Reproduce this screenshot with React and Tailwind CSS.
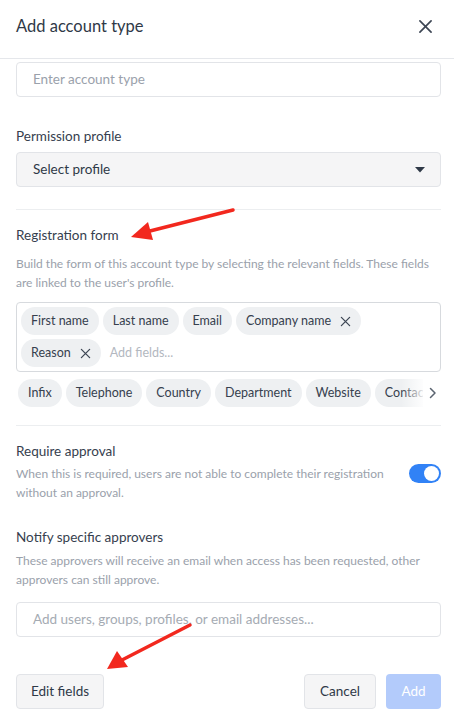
import React from 'react';

const font = { fontFamily: '"Lato", "Liberation Sans", sans-serif' };

function Chip({ label, removable }) {
  return (
    <span className="flex h-[28px] items-center gap-[9px] rounded-full bg-[#eef0f2] px-[10px] text-[12.5px] text-[#36404e] whitespace-nowrap">
      {label}
      {removable && (
        <svg width="11" height="11" viewBox="0 0 12 12" className="text-[#3d4654]">
          <path d="M1.5 1.5l9 9M10.5 1.5l-9 9" stroke="currentColor" strokeWidth="1.4" strokeLinecap="round" />
        </svg>
      )}
    </span>
  );
}

export default function App() {
  const selected = ['First name', 'Last name', 'Email'];
  const suggestions = ['Infix', 'Telephone', 'Country', 'Department', 'Website', 'Contact'];

  return (
    <div className="relative h-[719px] w-[454px] overflow-hidden bg-white text-[#36404e]" style={font}>
      {/* Header */}
      <div className="flex h-[59px] items-center justify-between border-b border-[#e5e7eb] pb-[6px] pl-4 pr-[22px]">
        <h2 className="text-[16.5px] text-[#2f3947]">Add account type</h2>
        <svg width="13" height="13" viewBox="0 0 14 14" className="text-[#3d4654]">
          <path d="M1 1l12 12M13 1L1 13" stroke="currentColor" strokeWidth="1.8" strokeLinecap="round" />
        </svg>
      </div>

      <div className="pl-4 pr-[13px] pt-[3px]">
        <div className="flex h-[35px] items-center rounded-[4px] border border-[#e2e4e8] px-4 text-[13.5px] text-[#9aa1ab]">
          Enter account type
        </div>

        <div className="mt-[29px] text-[13.5px] leading-[20px] text-[#36404e]">Permission profile</div>
        <div className="mt-[6px] flex h-[35px] items-center justify-between rounded-[4px] border border-[#e2e4e8] bg-[#f5f5f6] pl-4 pr-[15px] text-[13.5px] text-[#2f3947]">
          Select profile
          <svg width="10" height="6" viewBox="0 0 10 6"><path d="M0 0h10L5 5.5z" fill="#2f3947" /></svg>
        </div>

        <div className="mt-[22px] border-t border-[#eceef0]" />

        <div className="mt-[15px] text-[13.5px] leading-[20px] text-[#36404e]">Registration form</div>
        <p className="mt-[9px] text-[12px] leading-[19px] text-[#9aa1ab]">
          Build the form of this account type by selecting the relevant fields. These fields are linked to the user's profile.
        </p>

        <div className="mt-[10px] flex flex-wrap items-center gap-x-1 gap-y-[4px] rounded-[4px] border border-[#d7dade] px-1 py-1">
          {selected.map(s => <Chip key={s} label={s} />)}
          <Chip label="Company name" removable />
          <Chip label="Reason" removable />
          <span className="ml-[5px] text-[12.5px] text-[#b3b8bf]">Add fields...</span>
        </div>

        <div className="relative mt-[7px] flex items-center">
          <div className="ml-[2px] flex w-[405px] gap-1 overflow-hidden">
            {suggestions.map(s => <Chip key={s} label={s} />)}
          </div>
          <div className="absolute left-[385px] top-0 h-[28px] w-[25px] bg-gradient-to-r from-transparent to-white" />
          <svg width="8" height="12" viewBox="0 0 8 12" className="ml-[6px] text-[#5b6470]">
            <path d="M1.5 1.5L6 6l-4.5 4.5" fill="none" stroke="currentColor" strokeWidth="1.5" strokeLinecap="round" strokeLinejoin="round" />
          </svg>
        </div>

        <div className="mt-[18px] border-t border-[#eceef0]" />

        <div className="mt-[15px] text-[13.5px] leading-[20px] text-[#36404e]">Require approval</div>
        <div className="flex items-start justify-between">
          <p className="mt-[3px] w-[370px] text-[12px] leading-[19px] text-[#9aa1ab]">
            When this is required, users are not able to complete their registration without an approval.
          </p>
          <div className="mt-[3px] flex h-[19px] w-[32px] items-center justify-end rounded-full bg-[#3182f6] px-[2px]">
            <div className="h-[15px] w-[15px] rounded-full bg-white" />
          </div>
        </div>

        <div className="mt-[25px] text-[13.5px] leading-[20px] text-[#36404e]">Notify specific approvers</div>
        <p className="mt-[4px] text-[12px] leading-[19px] text-[#9aa1ab]">
          These approvers will receive an email when access has been requested, other approvers can still approve.
        </p>

        <div className="mt-[13px] flex h-[35px] items-center rounded-[4px] border border-[#e2e4e8] px-4 text-[13.5px] text-[#a5abb3]">
          Add users, groups, profiles, or email addresses...
        </div>

        <div className="mt-[37px] flex items-center justify-between">
          <button className="h-[35px] rounded-[4px] border border-[#e2e4e8] bg-[#f5f5f6] px-[14px] text-[13.5px] text-[#2f3947]">Edit fields</button>
          <div className="flex gap-[10px]">
            <button className="h-[35px] rounded-[4px] border border-[#e2e4e8] bg-[#f5f5f6] px-[15px] text-[13.5px] text-[#2f3947]">Cancel</button>
            <button className="h-[35px] w-[55px] rounded-[4px] bg-[#b3cbfb] text-[13.5px] text-white">Add</button>
          </div>
        </div>
      </div>

      {/* Annotation arrows */}
      <svg className="pointer-events-none absolute left-0 top-0" width="454" height="719">
        <line x1="233" y1="210" x2="146" y2="232" stroke="#f2281e" strokeWidth="3.5" strokeLinecap="round" />
        <polygon points="131,237 148,222 153,240" fill="#f2281e" />
        <line x1="190" y1="625" x2="122" y2="660" stroke="#f2281e" strokeWidth="3.5" strokeLinecap="round" />
        <polygon points="107,669 117,651 128,667" fill="#f2281e" />
      </svg>
    </div>
  );
}
